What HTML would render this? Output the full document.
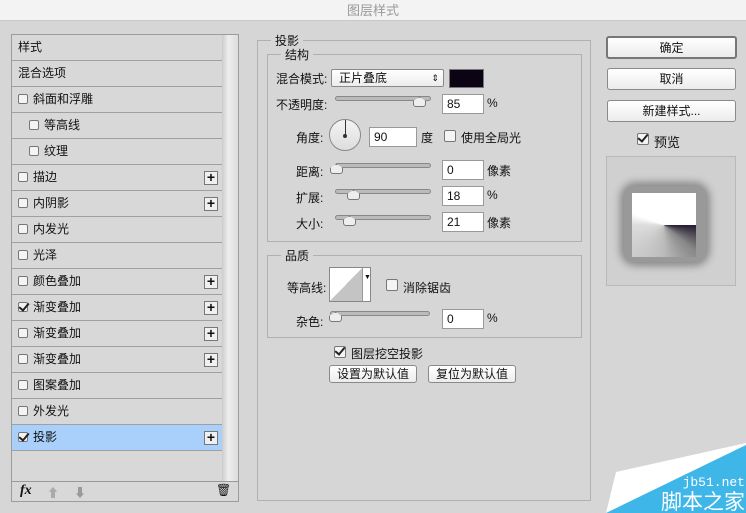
<!DOCTYPE html>
<html><head><meta charset="utf-8"><style>
*{box-sizing:border-box;margin:0;padding:0}
body{width:746px;height:513px;background:#d6d6d6;font-family:"Liberation Sans","Noto Sans CJK SC",sans-serif;font-size:12px;color:#111;position:relative;overflow:hidden}
.abs{position:absolute}
.title{left:0;top:0;width:746px;height:21px;background:#f3f3f3;border-bottom:1px solid #c8c8c8;text-align:center;line-height:21px;color:#9a9a9a;font-size:13px}
.lp{left:11px;top:34px;width:228px;height:468px;border:1px solid #9c9c9c;background:#d8d8d8}
.row{position:absolute;left:0;width:210px;height:26px;border-bottom:1px solid #a0a0a0;line-height:25px;padding-left:6px}
.cb{display:inline-block;width:10px;height:10px;border:1px solid #777;background:#f4f4f4;border-radius:2px;vertical-align:-1px;margin-right:5px;position:relative}
.cb.on::after{content:"";position:absolute;left:2px;top:-2px;width:4px;height:8px;border:solid #222;border-width:0 2px 2px 0;transform:rotate(40deg)}
.plus{position:absolute;right:4px;top:6px;width:14px;height:14px;border:1px solid #777;background:#f0f0f0;text-align:center;line-height:11px;font-weight:bold;font-size:14px}
.sb{left:210px;top:0;width:16px;height:446px;background:linear-gradient(90deg,#ccc,#eee 40%,#ddd)}
.fs{border:1px solid #b0b0b0}
.lg{background:#d6d6d6;padding:0 4px;font-size:12px}
.inp{position:absolute;width:42px;height:20px;background:#fff;border:1px solid #999;padding-left:4px;line-height:18px;font-size:12px}
.sl{position:absolute;height:5px;border:1px solid #888;border-radius:3px;background:#bbb;width:96px}
.th{position:absolute;top:-1px;width:0;height:0}
.th::before{content:"";position:absolute;left:-6px;top:1px;width:11px;height:8px;border:1px solid #777;background:#eee;border-radius:0 0 3px 3px;clip-path:polygon(50% 0,100% 40%,100% 100%,0 100%,0 40%)}
.btn{position:absolute;border:1px solid #8a8a8a;border-radius:3px;background:linear-gradient(#fff,#ececec);text-align:center;font-size:12px}
.lab{position:absolute;font-size:12px}
</style></head><body>
<div class="abs title">图层样式</div>

<div class="abs lp">
 <div class="row" style="top:0">样式</div>
 <div class="row" style="top:26px">混合选项</div>
 <div class="row" style="top:52px"><span class="cb"></span>斜面和浮雕</div>
 <div class="row" style="top:78px;padding-left:17px"><span class="cb"></span>等高线</div>
 <div class="row" style="top:104px;padding-left:17px"><span class="cb"></span>纹理</div>
 <div class="row" style="top:130px"><span class="cb"></span>描边<span class="plus">+</span></div>
 <div class="row" style="top:156px"><span class="cb"></span>内阴影<span class="plus">+</span></div>
 <div class="row" style="top:182px"><span class="cb"></span>内发光</div>
 <div class="row" style="top:208px"><span class="cb"></span>光泽</div>
 <div class="row" style="top:234px"><span class="cb"></span>颜色叠加<span class="plus">+</span></div>
 <div class="row" style="top:260px"><span class="cb on"></span>渐变叠加<span class="plus">+</span></div>
 <div class="row" style="top:286px"><span class="cb"></span>渐变叠加<span class="plus">+</span></div>
 <div class="row" style="top:312px"><span class="cb"></span>渐变叠加<span class="plus">+</span></div>
 <div class="row" style="top:338px"><span class="cb"></span>图案叠加</div>
 <div class="row" style="top:364px"><span class="cb"></span>外发光</div>
 <div class="row" style="top:390px;background:#a8d0fa"><span class="cb on"></span>投影<span class="plus">+</span></div>
 <div class="abs sb"></div>
 <div class="abs" style="left:0;top:446px;width:226px;border-top:1px solid #999;height:20px">
  <span class="abs" style="left:8px;top:1px;font-style:italic;font-weight:bold;font-family:'Liberation Serif',serif;font-size:14px">fx</span>
  <span class="abs" style="left:35px;top:2px;color:#aaa;font-size:12px">⬆</span>
  <span class="abs" style="left:62px;top:2px;color:#999;font-size:12px">⬇</span>
  <span class="abs" style="left:204px;top:1px;font-size:12px">🗑</span>
 </div>
</div>

<div class="abs fs" style="left:257px;top:40px;width:334px;height:461px"></div>
<span class="abs lg" style="left:271px;top:32px">投影</span>
<div class="abs fs" style="left:267px;top:54px;width:315px;height:188px"></div>
<span class="abs lg" style="left:281px;top:46px">结构</span>

<span class="lab" style="left:276px;top:70px">混合模式:</span>
<div class="btn" style="left:331px;top:69px;width:113px;height:18px;text-align:left;padding-left:7px;line-height:16px;border-radius:2px">正片叠底<span style="position:absolute;right:4px;font-size:9px">⇕</span></div>
<div class="abs" style="left:449px;top:69px;width:35px;height:19px;background:#0c0314;border:1px solid #777"></div>

<span class="lab" style="left:276px;top:96px">不透明度:</span>
<div class="sl" style="left:335px;top:96px"><div class="th" style="left:83px"></div></div>
<div class="inp" style="left:442px;top:94px">85</div><span class="lab" style="left:487px;top:96px">%</span>

<span class="lab" style="left:296px;top:129px">角度:</span>
<div class="abs" style="left:329px;top:119px;width:32px;height:32px;border:1px solid #888;border-radius:50%;background:linear-gradient(#f4f4f4,#ddd)">
 <div class="abs" style="left:15px;top:0;width:1px;height:16px;background:#333"></div>
 <div class="abs" style="left:13px;top:14px;width:4px;height:4px;border-radius:50%;background:#333"></div>
</div>
<div class="inp" style="left:369px;top:127px;width:48px">90</div>
<span class="lab" style="left:421px;top:129px">度</span>
<span class="cb" style="position:absolute;left:444px;top:130px;width:12px;height:12px"></span>
<span class="lab" style="left:461px;top:129px">使用全局光</span>

<span class="lab" style="left:296px;top:163px">距离:</span>
<div class="sl" style="left:335px;top:163px"><div class="th" style="left:0"></div></div>
<div class="inp" style="left:442px;top:160px">0</div><span class="lab" style="left:487px;top:162px">像素</span>

<span class="lab" style="left:296px;top:189px">扩展:</span>
<div class="sl" style="left:335px;top:189px"><div class="th" style="left:17px"></div></div>
<div class="inp" style="left:442px;top:186px">18</div><span class="lab" style="left:487px;top:188px">%</span>

<span class="lab" style="left:296px;top:215px">大小:</span>
<div class="sl" style="left:335px;top:215px"><div class="th" style="left:13px"></div></div>
<div class="inp" style="left:442px;top:212px">21</div><span class="lab" style="left:487px;top:214px">像素</span>

<div class="abs fs" style="left:267px;top:255px;width:315px;height:83px"></div>
<span class="abs lg" style="left:281px;top:247px">品质</span>
<span class="lab" style="left:287px;top:279px">等高线:</span>
<div class="abs" style="left:329px;top:267px;width:42px;height:35px;border:1px solid #888;background:#fff">
 <div class="abs" style="left:0;top:0;width:32px;height:33px;background:linear-gradient(to top left,#c4c4c4 50%,#fff 50%)"></div>
 <div class="abs" style="left:32px;top:0;width:1px;height:33px;background:#999"></div>
 <span class="abs" style="left:34px;top:6px;font-size:7px">▼</span>
</div>
<span class="cb" style="position:absolute;left:386px;top:279px;width:12px;height:12px"></span>
<span class="lab" style="left:403px;top:279px">消除锯齿</span>
<span class="lab" style="left:296px;top:313px">杂色:</span>
<div class="sl" style="left:330px;top:311px;width:100px"><div class="th" style="left:4px"></div></div>
<div class="inp" style="left:442px;top:309px">0</div><span class="lab" style="left:487px;top:311px">%</span>

<span class="cb on" style="position:absolute;left:334px;top:346px;width:12px;height:12px"></span>
<span class="lab" style="left:351px;top:345px">图层挖空投影</span>
<div class="btn" style="left:329px;top:365px;width:88px;height:18px;line-height:16px">设置为默认值</div>
<div class="btn" style="left:428px;top:365px;width:88px;height:18px;line-height:16px">复位为默认值</div>

<div class="btn" style="left:606px;top:36px;width:131px;height:23px;line-height:21px;border:2px solid #777">确定</div>
<div class="btn" style="left:607px;top:68px;width:129px;height:22px;line-height:20px">取消</div>
<div class="btn" style="left:607px;top:100px;width:129px;height:22px;line-height:20px">新建样式...</div>
<span class="cb on" style="position:absolute;left:637px;top:133px;width:12px;height:12px"></span>
<span class="lab" style="left:654px;top:132px;font-size:13px">预览</span>
<div class="abs" style="left:606px;top:156px;width:130px;height:130px;border:1px solid #b8b8b8;background:#d0d0d0">
 <div class="abs" style="left:17px;top:29px;width:82px;height:76px;border-radius:12px;background:#999;box-shadow:0 0 8px 4px #8a8a8a"></div>
 <div class="abs" style="left:25px;top:36px;width:64px;height:64px;background:conic-gradient(from 90deg at 50% 50%,#231a2e 0deg,#888 40deg,#bbb 90deg,#ddd 180deg,#fff 200deg,#fff 360deg)"></div>
</div>

<svg class="abs" style="left:600px;top:440px" width="146" height="73"><polygon points="16,32 146,3 146,30 6,73" fill="#fff"/><polygon points="6,73 146,5 146,73" fill="#3fb6e8"/>
<text x="145" y="46" fill="#fff" font-size="13" font-family="Liberation Mono,monospace" text-anchor="end">jb51.net</text>
<text x="145" y="69" fill="#fff" font-size="21" font-family="Noto Sans CJK SC,sans-serif" text-anchor="end">脚本之家</text></svg>
</body></html>
